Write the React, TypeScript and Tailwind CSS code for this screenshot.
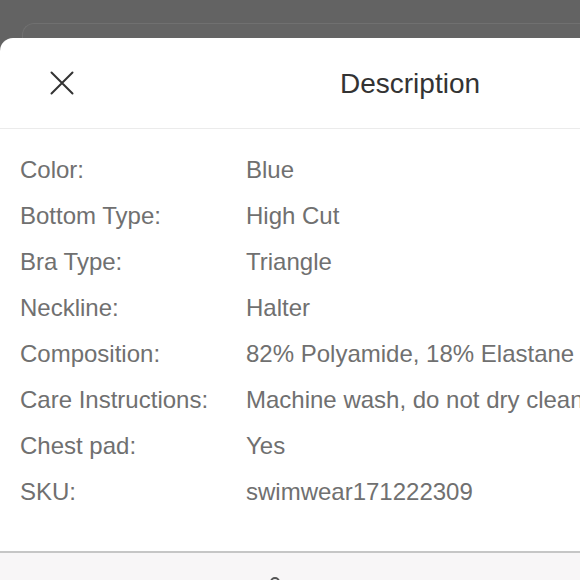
import React from "react";

const rows: [string, string][] = [
  ["Color:", "Blue"],
  ["Bottom Type:", "High Cut"],
  ["Bra Type:", "Triangle"],
  ["Neckline:", "Halter"],
  ["Composition:", "82% Polyamide, 18% Elastane"],
  ["Care Instructions:", "Machine wash, do not dry clean"],
  ["Chest pad:", "Yes"],
  ["SKU:", "swimwear171222309"],
];

export default function App() {
  return (
    <div
      className="w-[580px] h-[580px] overflow-hidden bg-[#636363] flex flex-col"
      style={{ fontFamily: '"Liberation Sans", Arial, sans-serif' }}
    >
      <div className="h-[23px] shrink-0 overflow-hidden relative">
        <div className="absolute left-[48px] top-[-27px] text-[24px] leading-[30px] text-[#3a3a3a] whitespace-nowrap">
          Product Details
        </div>
      </div>
      <div className="h-[15px] shrink-0 ml-[22px] rounded-tl-[12px] border-t border-l border-[#707070] bg-[#646464]" />
      <div className="w-[820px] shrink-0 bg-white rounded-t-[13px] flex flex-col">
        <div className="h-[91px] relative flex items-center justify-center border-b border-[#ebebeb]">
          <svg
            className="absolute left-[50px] top-[33px]"
            width="24"
            height="24"
            viewBox="0 0 24 24"
            fill="none"
            stroke="#333"
            strokeWidth="2"
            strokeLinecap="round"
          >
            <path d="M1.5 1.5 L22.5 22.5 M22.5 1.5 L1.5 22.5" />
          </svg>
          <span className="text-[28px] text-[#333333] leading-none mt-[2px]">Description</span>
        </div>
        <div className="pt-[18px] pb-[36px] pl-[20px]">
          {rows.map(([k, v]) => (
            <div key={k} className="h-[46px] flex items-center text-[24px] text-[#707070] whitespace-nowrap">
              <div className="w-[226px] shrink-0">{k}</div>
              <div>{v}</div>
            </div>
          ))}
        </div>
        <div className="h-[40px] bg-[#f8f6f7] border-t-2 border-[#c6c6c6] relative">
          <div className="absolute left-[270px] top-[24px] w-[10px] h-[10px] rounded-full border-2 border-[#555]" />
        </div>
      </div>
    </div>
  );
}
